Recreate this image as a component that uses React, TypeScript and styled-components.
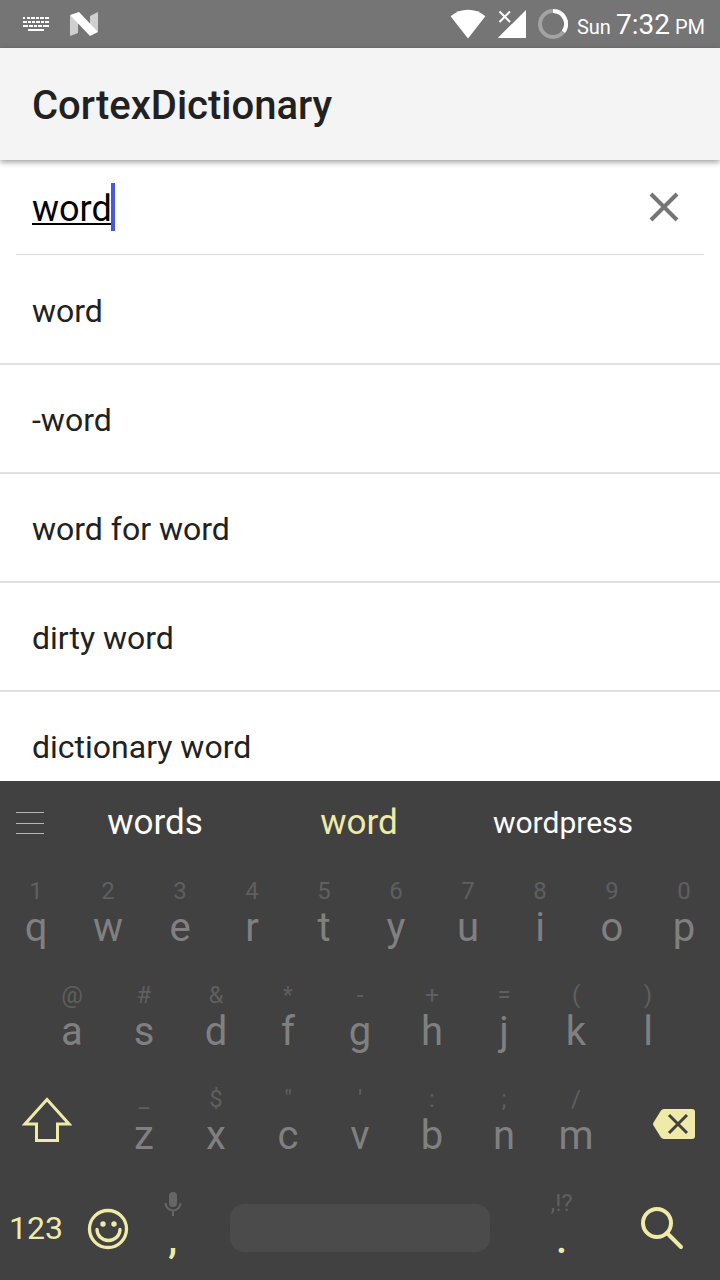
import React, { useState } from "react";
import styled, { createGlobalStyle } from "styled-components";

const Global = createGlobalStyle`
  *, *::before, *::after { box-sizing: border-box; }
  body { margin: 0; background: #fff; font-family: Roboto, "Liberation Sans", sans-serif; }
  button, input { font: inherit; color: inherit; margin: 0; padding: 0; border: 0; background: none; outline: none; }
  button { cursor: pointer; }
  svg { display: block; flex: none; }
`;

const accent = "#f0eaa9";

const Screen = styled.div`
  display: flex;
  flex-direction: column;
  height: 100vh;
  overflow: hidden;
`;

const StatusBar = styled.div`
  display: flex;
  align-items: center;
  justify-content: space-between;
  flex: none;
  height: 48px;
  padding: 0 15px 0 22px;
  background: #757575;
  color: #fff;
`;

const StatusGroup = styled.div<{ $gap: number }>`
  display: flex;
  align-items: center;
  gap: ${(p) => p.$gap}px;
`;

const Clock = styled.div`
  display: flex;
  align-items: baseline;
  gap: 5px;
  margin-left: -3px;
  padding-top: 4px;
  line-height: 32px;
  font-size: 20px;
`;

const Time = styled.span`
  font-size: 28px;
`;

const AppBar = styled.header`
  position: relative;
  display: flex;
  align-items: center;
  flex: none;
  height: 112px;
  padding: 4px 32px 0;
  background: #f4f4f4;
  box-shadow: 0 2px 6px rgba(0, 0, 0, 0.4);
`;

const Title = styled.h1`
  margin: 0;
  font-size: 40px;
  line-height: 48px;
  font-weight: 500;
  color: #212121;
`;

const SearchRow = styled.form`
  display: flex;
  align-items: center;
  flex: none;
  height: 95px;
  margin: 0 16px;
  padding: 0 16px;
  border-bottom: 1px solid #dadada;
`;

const SearchInput = styled.input`
  field-sizing: content;
  min-width: 8px;
  max-width: 80%;
  height: 48px;
  padding-top: 4px;
  font-size: 36px;
  color: #000;
  caret-color: transparent;
  text-decoration: underline;
  text-decoration-thickness: 2px;
  text-underline-offset: 2px;
  text-decoration-skip-ink: none;
`;

const Caret = styled.span`
  width: 4px;
  height: 48px;
  margin-left: -1px;
  background: #4758e0;
`;

const ClearButton = styled.button`
  display: flex;
  align-items: center;
  justify-content: center;
  width: 48px;
  height: 48px;
  margin-left: auto;
`;

const Results = styled.ul`
  flex: 1 1 0;
  min-height: 0;
  margin: 0;
  padding: 1px 0 0;
  overflow: hidden;
  list-style: none;
`;

const Result = styled.li`
  border-bottom: 2px solid #e0e0e0;
`;

const ResultButton = styled.button`
  display: block;
  width: 100%;
  padding: 4px 32px 0;
  text-align: left;
  font-size: 32px;
  line-height: 103px;
  color: #212121;
`;

const Keyboard = styled.section`
  flex: none;
  background: #414141;
`;

const Suggestions = styled.div`
  display: grid;
  grid-template-columns: 53px repeat(3, 1fr) 55px;
  height: 83px;
`;

const MenuButton = styled.button`
  display: flex;
  align-items: center;
  padding-left: 16px;
`;

const Suggestion = styled.button<{ $active?: boolean; $small?: boolean }>`
  font-size: ${(p) => (p.$small ? 30 : 35)}px;
  color: ${(p) => (p.$active ? accent : "#fff")};
`;

const KeyRow = styled.div<{ $columns: string; $inset?: boolean }>`
  display: grid;
  grid-template-columns: ${(p) => p.$columns};
  height: 104px;
  padding: 0 ${(p) => (p.$inset ? "5%" : "0")};
`;

const LetterKey = styled.button<{ $accent?: boolean }>`
  display: flex;
  flex-direction: column;
  align-items: center;
  padding-top: 13px;
  font-size: 40px;
  font-weight: ${(p) => (p.$accent ? 500 : 400)};
  line-height: 46px;
  color: ${(p) => (p.$accent ? accent : "#808080")};
`;

const Hint = styled.span`
  display: flex;
  align-items: center;
  height: 28px;
  font-size: 24px;
  font-weight: 400;
  line-height: 28px;
  color: #5f5f5f;
`;

const ActionKey = styled.button<{ $pad?: string }>`
  display: flex;
  align-items: center;
  justify-content: center;
  padding: ${(p) => p.$pad ?? "0"};
  font-size: 32px;
  color: ${accent};
`;

const SpaceKey = styled.button`
  align-self: center;
  height: 48px;
  margin: 0 28px;
  border-radius: 14px;
  background: #4b4b4b;
`;

const KeyboardIcon = () => (
  <svg width="28" height="16" viewBox="0 0 28 16" fill="#fff" aria-hidden="true">
    <path d="M1 1h2v2H1zM5 1h3v2H5zM9 1h4v2H9zM14 1h3v2h-3zM18 1h4v2h-4zM23 1h4v2h-4zM1 5h4v2H1zM6 5h3v2H6zM10 5h3v2h-3zM14 5h4v2h-4zM19 5h3v2h-3zM23 5h4v2h-4zM1 9h5v2H1zM7 9h4v2H7zM12 9h3v2h-3zM16 9h4v2h-4zM21 9h6v2h-6zM6 13h16v2H6z" />
  </svg>
);

const NougatIcon = () => (
  <svg width="28" height="24" viewBox="0 0 28 24" aria-hidden="true">
    <path d="M0 3l8 6v12l-8 3zM28 0v20l-8-6V4z" fill="#cfcfcf" />
    <path d="M0 3L9 0l19 20-8 4z" fill="#fff" />
  </svg>
);

const WifiIcon = () => (
  <svg width="36" height="30" viewBox="0 0 36 30" fill="#fff" aria-hidden="true">
    <path d="M18 29.500L.6 7.200C5.600 2.800 11.500.7 18 .7S30.400 2.800 35.400 7.200z" />
  </svg>
);

const SignalIcon = () => (
  <svg width="28" height="28" viewBox="0 0 28 28" aria-hidden="true">
    <path d="M28 0v28H0z" fill="#fff" />
    <path d="M0 0h14v12L6 20H0z" fill="#757575" />
    <path d="M14 14L0 28h14z" fill="#fff" />
    <path d="M1.500 1.500l10.500 10.500M12 1.500L1.500 12" stroke="#fff" strokeWidth="2" />
  </svg>
);

const BatteryIcon = () => (
  <svg width="30" height="30" viewBox="0 0 30 30" fill="none" strokeWidth="4" aria-hidden="true">
    <circle cx="15" cy="15" r="13" stroke="#a3a3a3" />
    <path d="M15 2a13 13 0 0 1 10.500 20.700" stroke="#fff" />
  </svg>
);

const CloseIcon = () => (
  <svg width="30" height="30" viewBox="0 0 30 30" stroke="#757575" strokeWidth="4" aria-hidden="true">
    <path d="M2 2l26 26M28 2L2 28" />
  </svg>
);

const MenuIcon = () => (
  <svg width="28" height="24" viewBox="0 0 28 24" fill="#b5b5b5" aria-hidden="true">
    <path d="M0 1h28v1H0zM0 12h28v1H0zM0 22h28v1H0z" />
  </svg>
);

const ShiftIcon = () => (
  <svg width="50" height="46" viewBox="0 0 50 46" fill="none" stroke={accent} strokeWidth="3" aria-hidden="true">
    <path d="M25 2.500L3 27H14.500v16.500h21V27H47z" />
  </svg>
);

const BackspaceIcon = () => (
  <svg width="42" height="30" viewBox="0 0 42 30" aria-hidden="true">
    <path d="M11 0h28a3 3 0 0 1 3 3v24a3 3 0 0 1-3 3H11a4 4 0 0 1-3-1.500L.5 16.500a3 3 0 0 1 0-3L8 1.500A4 4 0 0 1 11 0z" fill={accent} />
    <path d="M16 6l18 18M34 6L16 24" stroke="#414141" strokeWidth="3" />
  </svg>
);

const SmileIcon = () => (
  <svg width="42" height="42" viewBox="0 0 42 42" fill="none" stroke={accent} strokeWidth="3.300" aria-hidden="true">
    <circle cx="21" cy="21" r="18.500" />
    <path d="M10 21.500a11.500 11 0 0 0 23 0" strokeLinecap="round" />
    <circle cx="16" cy="16" r="2.700" fill={accent} stroke="none" />
    <circle cx="27" cy="16" r="2.700" fill={accent} stroke="none" />
  </svg>
);

const MicIcon = () => (
  <svg width="18" height="26" viewBox="0 0 18 26" fill="none" aria-hidden="true">
    <rect x="5" y="2" width="8" height="15" rx="4" fill="#666" />
    <path d="M1.500 13a7.500 7.500 0 0 0 15 0M9 20.500V26" stroke="#666" strokeWidth="2" />
  </svg>
);

const SearchIcon = () => (
  <svg width="44" height="44" viewBox="0 0 44 44" fill="none" stroke={accent} aria-hidden="true">
    <circle cx="17" cy="17" r="14" strokeWidth="4" />
    <path d="M27 27l14 14" strokeWidth="4" strokeLinecap="round" />
  </svg>
);

type Key = { letter: string; hint: React.ReactNode };

const makeKeys = (letters: string, hints: string): Key[] =>
  letters.split("").map((letter, i) => ({ letter, hint: hints[i] }));

const topKeys = makeKeys("qwertyuiop", "1234567890");
const middleKeys = makeKeys("asdfghjkl", "@#&*-+=()");
const bottomKeys = makeKeys("zxcvbnm", "_$\"':;/");

const results = ["word", "-word", "word for word", "dirty word", "dictionary word"];

export default function App() {
  const [query, setQuery] = useState("word");
  const type = (letter: string) => setQuery((q) => q + letter);

  const renderKey = ({ letter, hint }: Key) => (
    <LetterKey key={letter} type="button" onClick={() => type(letter)}>
      <Hint>{hint}</Hint>
      {letter}
    </LetterKey>
  );

  return (
    <Screen>
      <Global />
      <StatusBar>
        <StatusGroup $gap={20}>
          <KeyboardIcon />
          <NougatIcon />
        </StatusGroup>
        <StatusGroup $gap={12}>
          <WifiIcon />
          <SignalIcon />
          <BatteryIcon />
          <Clock>
            <span>Sun</span>
            <Time>7:32</Time>
            <span>PM</span>
          </Clock>
        </StatusGroup>
      </StatusBar>
      <AppBar>
        <Title>CortexDictionary</Title>
      </AppBar>
      <SearchRow onSubmit={(e) => e.preventDefault()}>
        <SearchInput aria-label="Search word" value={query} onChange={(e) => setQuery(e.target.value)} />
        <Caret />
        <ClearButton type="button" aria-label="Clear" onClick={() => setQuery("")}>
          <CloseIcon />
        </ClearButton>
      </SearchRow>
      <Results>
        {results.map((r) => (
          <Result key={r}>
            <ResultButton type="button" onClick={() => setQuery(r)}>{r}</ResultButton>
          </Result>
        ))}
      </Results>
      <Keyboard aria-label="Keyboard">
        <Suggestions>
          <MenuButton type="button" aria-label="Menu"><MenuIcon /></MenuButton>
          <Suggestion type="button" onClick={() => setQuery("words")}>words</Suggestion>
          <Suggestion type="button" $active onClick={() => setQuery("word")}>word</Suggestion>
          <Suggestion type="button" $small onClick={() => setQuery("wordpress")}>wordpress</Suggestion>
        </Suggestions>
        <KeyRow $columns="repeat(10, 1fr)">{topKeys.map(renderKey)}</KeyRow>
        <KeyRow $columns="repeat(9, 1fr)" $inset>{middleKeys.map(renderKey)}</KeyRow>
        <KeyRow $columns="15fr repeat(7, 10fr) 15fr">
          <ActionKey type="button" aria-label="Shift" $pad="0 14px 8px 0"><ShiftIcon /></ActionKey>
          {bottomKeys.map(renderKey)}
          <ActionKey type="button" aria-label="Backspace" $pad="0 0 0 16px" onClick={() => setQuery((q) => q.slice(0, -1))}>
            <BackspaceIcon />
          </ActionKey>
        </KeyRow>
        <KeyRow $columns="10fr 10fr 8fr 44fr 12fr 16fr">
          <ActionKey type="button">123</ActionKey>
          <ActionKey type="button" aria-label="Emoji" $pad="2px 0 0"><SmileIcon /></ActionKey>
          <LetterKey type="button" $accent onClick={() => type(",")}>
            <Hint><MicIcon /></Hint>
            ,
          </LetterKey>
          <SpaceKey type="button" aria-label="Space" onClick={() => type(" ")} />
          <LetterKey type="button" $accent onClick={() => type(".")}>
            <Hint>,!?</Hint>
            .
          </LetterKey>
          <ActionKey type="button" aria-label="Search"><SearchIcon /></ActionKey>
        </KeyRow>
      </Keyboard>
    </Screen>
  );
}
